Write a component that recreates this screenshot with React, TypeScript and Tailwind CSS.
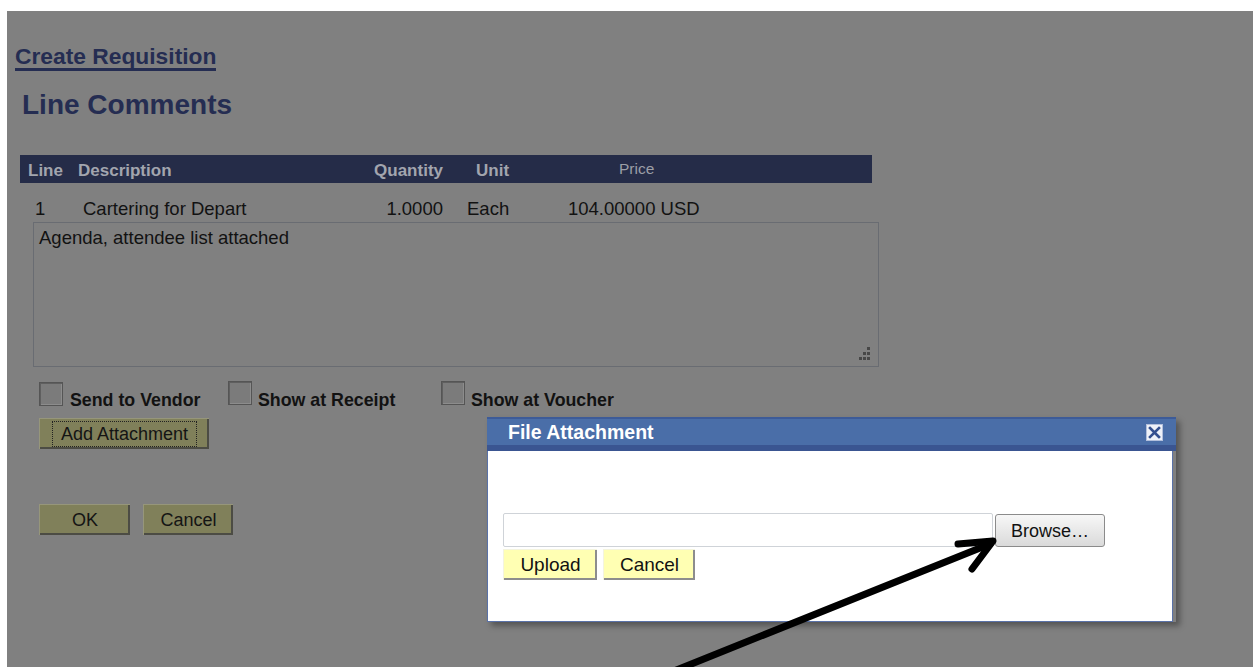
import React from "react";

const font = "font-['Liberation_Sans',Arial,sans-serif]";

function Checkbox() {
  return (
    <div className="w-[24px] h-[24px] shrink-0 border border-[#555555] bg-[#7b7b7b] shadow-[inset_1px_1px_0_#5f5f5f,inset_-1px_-1px_0_#8c8c8c]" />
  );
}

function OliveButton({
  label,
  width,
  focused,
}: {
  label: string;
  width: string;
  focused?: boolean;
}) {
  return (
    <div
      className={`${width} h-[31px] flex items-center justify-center bg-[#80805a] border-t border-l border-[#96967a] shadow-[inset_-2px_-2px_0_#4c4c44] text-[18px] text-[#141414]`}
    >
      {focused ? (
        <span className="border border-dotted border-[#222] px-[8px] leading-[24px] -mt-[1px]">
          {label}
        </span>
      ) : (
        <span className="leading-[24px]">{label}</span>
      )}
    </div>
  );
}

function YellowButton({ label, width }: { label: string; width: string }) {
  return (
    <div
      className={`${width} h-[31px] flex items-center justify-center bg-[#ffffb3] border-t border-l border-[#f4f4e0] shadow-[inset_-2px_-2px_0_#8d8d8d] text-[19px] text-[#111]`}
    >
      <span className="leading-[24px]">{label}</span>
    </div>
  );
}

function ResizeGrip() {
  return (
    <svg width="16" height="16" viewBox="0 0 16 16" className="absolute right-[7px] bottom-[5px]">
      <g fill="#474747">
        <rect x="12" y="2" width="3" height="3" />
        <rect x="8" y="7" width="3" height="3" />
        <rect x="12" y="7" width="3" height="3" />
        <rect x="4" y="12" width="3" height="3" />
        <rect x="8" y="12" width="3" height="3" />
        <rect x="12" y="12" width="3" height="3" />
      </g>
    </svg>
  );
}

function CloseBox() {
  return (
    <svg width="17" height="17" viewBox="0 0 17 17">
      <rect x="0.5" y="0.5" width="16" height="16" fill="#eef1f8" stroke="#b3c0dc" />
      <path d="M4 4 L13 13 M13 4 L4 13" stroke="#34508f" strokeWidth="2.6" strokeLinecap="square" />
    </svg>
  );
}

function FileAttachmentDialog() {
  return (
    <div className="absolute left-[480px] top-[406px] w-[689px] shadow-[4px_4px_6px_rgba(0,0,0,0.35)]">
      <div className="h-[34px] bg-[#4a6ea8] border-t-2 border-[#3d5b98] border-b-[6px] border-b-[#3a5591] flex items-center justify-between pl-[21px] pr-[13px]">
        <span className="text-[19.5px] font-bold text-white leading-[22px]">File Attachment</span>
        <CloseBox />
      </div>
      <div className="mr-[3px] h-[171px] bg-white border-l border-b border-r border-[#5a72a8] pl-[15px] pt-[62px]">
        <div className="flex items-start gap-[2px]">
          <div className="w-[490px] h-[34px] border border-[#cfd3d8] rounded-[2px] bg-white" />
          <div className="w-[110px] h-[33px] mt-[1px] rounded-[3px] border border-[#8b8b8b] bg-gradient-to-b from-[#f7f7f7] to-[#dadada] flex items-center justify-center text-[18px] text-[#111] leading-[22px]">
            Browse…
          </div>
        </div>
        <div className="flex gap-[6px] mt-[2px]">
          <YellowButton label="Upload" width="w-[94px]" />
          <YellowButton label="Cancel" width="w-[92px]" />
        </div>
      </div>
    </div>
  );
}

function PointerArrow() {
  return (
    <svg
      className="absolute left-0 top-0 pointer-events-none"
      width="1253"
      height="667"
      viewBox="0 0 1253 667"
    >
      <g stroke="#000" strokeWidth="7" strokeLinecap="round" fill="none">
        <path d="M664 675 L990 544" />
        <path d="M958 544 L993 541 L972 569" strokeLinejoin="round" />
      </g>
    </svg>
  );
}

export default function App() {
  return (
    <div className={`relative w-[1253px] h-[667px] bg-white pt-[11px] pl-[7px] overflow-hidden ${font}`}>
      <div className="relative w-[1246px] h-[656px] bg-[#808080]">
        {/* page heading */}
        <div className="pl-[8px] pt-[33px]">
          <span className="inline-block text-[22.8px] leading-[24px] font-bold text-[#252d52] border-b-[3px] border-[#252d52]">
            Create Requisition
          </span>
        </div>
        <div className="pl-[15px] mt-[18px] text-[28px] leading-[32px] font-bold text-[#252d52]">
          Line Comments
        </div>

        {/* line table */}
        <div className="ml-[13px] mt-[34px] w-[852px] h-[28px] bg-[#252c48] flex items-center pt-[4px] text-[17px] font-bold text-[#a2a5ae] leading-[20px]">
          <span className="w-[58px] pl-[8px]">Line</span>
          <span className="w-[275px]">Description</span>
          <span className="w-[90px] text-right">Quantity</span>
          <span className="w-[176px] pl-[33px]">Unit</span>
          <span className="text-[15.5px] font-normal text-[#9b9ea6] -mt-[4px]">Price</span>
        </div>
        <div className="ml-[13px] mt-[15px] flex text-[18.5px] leading-[22px] text-[#121212]">
          <span className="w-[63px] pl-[15px]">1</span>
          <span className="w-[270px]">Cartering for Depart</span>
          <span className="w-[90px] text-right">1.0000</span>
          <span className="w-[125px] pl-[24px]">Each</span>
          <span>104.00000 USD</span>
        </div>
        <div className="relative ml-[26px] mt-[2px] w-[846px] h-[145px] border border-[#696c72] pl-[5px] pt-[4px] text-[18.5px] leading-[22px] text-[#121212]">
          Agenda, attendee list attached
          <ResizeGrip />
        </div>

        {/* options */}
        <div className="ml-[32px] mt-[15px] h-[36px] flex items-start text-[17.8px] font-bold leading-[20px] text-[#121212]">
          <div className="w-[189px] flex items-start">
            <Checkbox />
            <span className="ml-[7px] mt-[8px]">Send to Vendor</span>
          </div>
          <div className="w-[213px] flex items-start -mt-[1px]">
            <Checkbox />
            <span className="ml-[6px] mt-[9px]">Show at Receipt</span>
          </div>
          <div className="flex items-start -mt-[1px]">
            <Checkbox />
            <span className="ml-[6px] mt-[9px]">Show at Voucher</span>
          </div>
        </div>
        <div className="ml-[32px]">
          <OliveButton label="Add Attachment" width="w-[170px]" focused />
        </div>
        <div className="ml-[32px] mt-[55px] flex gap-[13px]">
          <OliveButton label="OK" width="w-[91px]" />
          <OliveButton label="Cancel" width="w-[90px]" />
        </div>

        <FileAttachmentDialog />
      </div>
      <PointerArrow />
    </div>
  );
}
